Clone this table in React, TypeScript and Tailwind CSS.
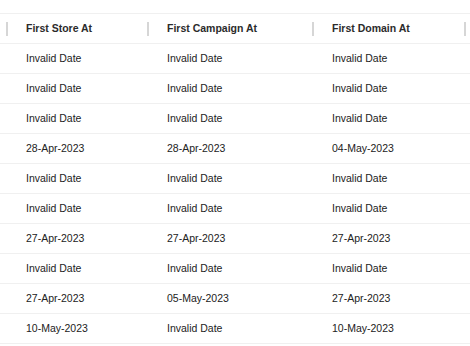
import React from "react";

const rows: [string, string, string][] = [
  ["Invalid Date", "Invalid Date", "Invalid Date"],
  ["Invalid Date", "Invalid Date", "Invalid Date"],
  ["Invalid Date", "Invalid Date", "Invalid Date"],
  ["28-Apr-2023", "28-Apr-2023", "04-May-2023"],
  ["Invalid Date", "Invalid Date", "Invalid Date"],
  ["Invalid Date", "Invalid Date", "Invalid Date"],
  ["27-Apr-2023", "27-Apr-2023", "27-Apr-2023"],
  ["Invalid Date", "Invalid Date", "Invalid Date"],
  ["27-Apr-2023", "05-May-2023", "27-Apr-2023"],
  ["10-May-2023", "Invalid Date", "10-May-2023"],
];

const widths = ["w-[141px]", "w-[165px]", "w-[152px]"];
const headers = ["First Store At", "First Campaign At", "First Domain At"];

const Sep = () => <div className="w-[2px] h-[14px] bg-[#d6d6d6] shrink-0" />;

export default function App() {
  return (
    <div
      className="w-[470px] h-[346px] overflow-hidden bg-white pt-[13px]"
      style={{ fontFamily: '"Liberation Sans", Arial, sans-serif' }}
    >
      <div className="w-[520px]">
        {/* header */}
        <div className="flex h-[31px] border-y border-[#f0f0f0] bg-white text-[10.5px] font-semibold text-[#2b2b2b]">
          <div className="w-[9px] shrink-0 flex items-center justify-end pr-[1px]">
            <Sep />
          </div>
          {headers.map((h, i) => (
            <div key={h} className={`${widths[i]} shrink-0 flex items-center justify-between pl-[17px] pr-[1px]`}>
              <span>{h}</span>
              <Sep />
            </div>
          ))}
          <div className="flex-1" />
        </div>

        {/* body */}
        {rows.map((r, ri) => (
          <div key={ri} className="flex h-[30px] border-b border-[#f0f0f0] text-[10.5px] text-[#222222]">
            <div className="w-[9px] shrink-0" />
            {r.map((c, ci) => (
              <div key={ci} className={`${widths[ci]} shrink-0 flex items-center pl-[17px]`}>
                {c}
              </div>
            ))}
            <div className="flex-1" />
          </div>
        ))}
      </div>
    </div>
  );
}
